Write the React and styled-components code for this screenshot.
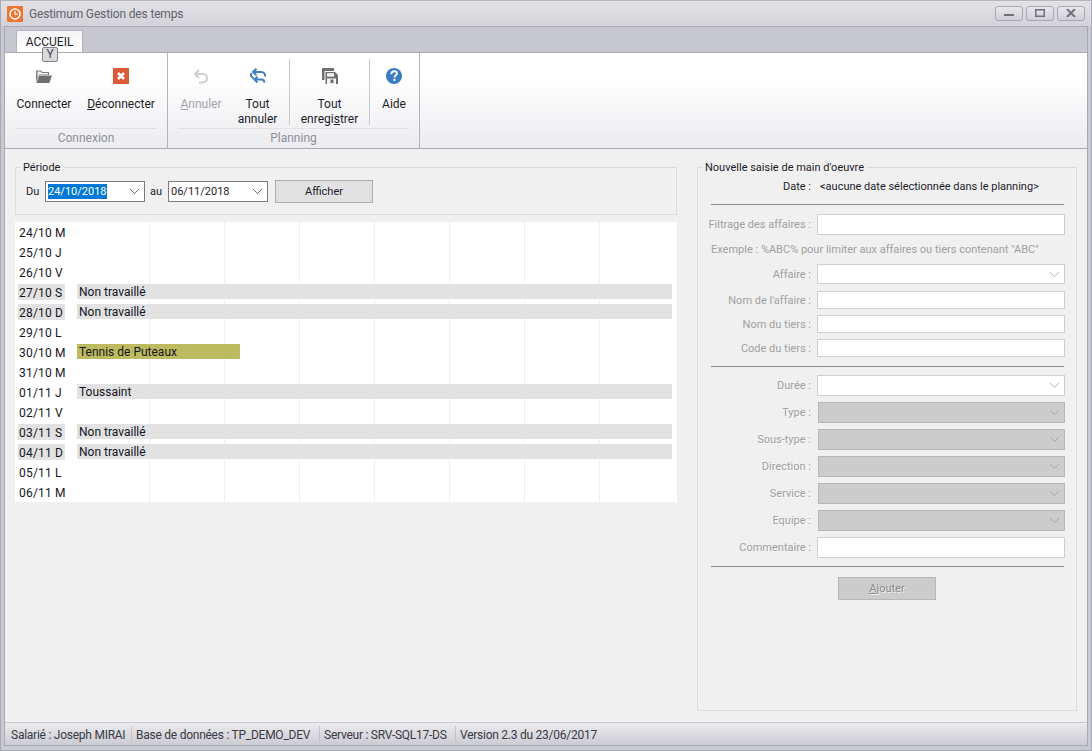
import React from 'react';
import styled, { createGlobalStyle } from 'styled-components';

const GlobalStyle = createGlobalStyle`
  html, body {
    margin: 0;
    padding: 0;
    height: 100%;
    overflow: hidden;
  }
  #root {
    height: 100%;
  }
`;

const Window = styled.div`
  width: 1092px;
  height: 751px;
  box-sizing: border-box;
  display: flex;
  flex-direction: column;
  background: #c9c9d1;
  border: 1px solid #a9a9b3;
  border-top-color: #b5b5bd;
  font-family: Roboto, "Noto Sans", sans-serif;
  font-size: 12px;
  color: #1c1c28;
`;

const TitleBar = styled.div`
  height: 25px;
  flex: none;
  display: flex;
  align-items: center;
  padding: 0 6px 0 6px;
  background: linear-gradient(180deg, #e2e2e6 0%, #d2d2d8 100%);
`;

const AppLogo = styled.svg`
  width: 16px;
  height: 16px;
  margin-right: 6px;
`;

const TitleText = styled.div`
  flex: 1;
  color: #62626c;
  letter-spacing: -0.15px;
`;

const WinButtons = styled.div`
  display: flex;
  gap: 3px;
  margin-top: -1px;
`;

const WinButton = styled.div`
  width: 28px;
  height: 15px;
  box-sizing: border-box;
  border: 1px solid #a8a8b2;
  border-radius: 3px;
  background: linear-gradient(180deg, #e8e8ec 0%, #cfcfd6 100%);
  display: flex;
  align-items: center;
  justify-content: center;
`;

const Inner = styled.div`
  flex: 1;
  display: flex;
  flex-direction: column;
  margin: 0 3px 4px;
  border: 1px solid #a9a9b3;
  min-height: 0;
`;

const TabStrip = styled.div`
  height: 25px;
  flex: none;
  background: #c7c7cf;
  padding: 3px 0 0 11px;
  box-sizing: border-box;
  position: relative;
`;

const Tab = styled.div`
  width: 67px;
  height: 22px;
  box-sizing: border-box;
  padding-top: 5px;
  background: linear-gradient(180deg, #f4f4f6 0%, #ffffff 100%);
  border: 1px solid #b4b4bd;
  border-bottom: none;
  border-radius: 2px 2px 0 0;
  text-align: center;
  line-height: 12px;
  color: #1c1c28;
`;

const KeyTip = styled.div`
  position: absolute;
  left: 37px;
  top: 20px;
  width: 16px;
  height: 15px;
  box-sizing: border-box;
  border: 1px solid #82828c;
  border-radius: 2px;
  background: #d9d9de;
  text-align: center;
  line-height: 13px;
  color: #4a4a52;
  z-index: 2;
`;

const Ribbon = styled.div`
  height: 95px;
  flex: none;
  display: flex;
  background: linear-gradient(180deg, #ffffff 0%, #ffffff 25%, #ececf0 100%);
  border-top: 1px solid #a9a9b3;
  border-bottom: 1px solid #a9a9b3;
  box-sizing: content-box;
`;

const RibbonGroup = styled.div`
  width: ${p => p.$w}px;
  box-sizing: border-box;
  display: flex;
  flex-direction: column;
  border-right: 1px solid #b4b4bd;
`;

const GroupButtons = styled.div`
  height: 75px;
  display: flex;
  padding-left: ${p => p.$pad}px;
  padding-top: 6px;
  box-sizing: border-box;
`;

const GroupName = styled.div`
  margin: 0 10px;
  height: 19px;
  border-top: 1px solid #e2e2e6;
  text-align: center;
  line-height: 18px;
  color: #8e8e98;
`;

const RibbonButton = styled.div`
  width: ${p => p.$w}px;
  box-sizing: border-box;
  display: flex;
  flex-direction: column;
  align-items: center;
  text-align: center;
  line-height: 15px;
  color: ${p => (p.$off ? '#a3a3ab' : '#1c1c28')};
  ${p => p.$split && 'border-right: 1px solid #c9c9cf; margin-bottom: 3px;'}
`;

const IconSlot = styled.div`
  height: 34px;
  flex: none;
  margin-bottom: 4px;
  display: flex;
  align-items: center;
  justify-content: center;
`;

const Content = styled.div`
  flex: 1;
  display: flex;
  gap: 20px;
  background: #f0f0f0;
  padding: 11px 10px 11px 10px;
  min-height: 0;
  font-size: 11px;
`;

const LeftColumn = styled.div`
  width: 662px;
  flex: none;
  display: flex;
  flex-direction: column;
  gap: 7px;
`;

const Group = styled.fieldset`
  margin: 0;
  padding: 0;
  min-width: 0;
  border: 1px solid #dcdcdc;
  box-sizing: border-box;
`;

const Legend = styled.legend`
  height: 14px;
  padding: 0 3px 0 ${p => p.$pad}px;
  margin-left: ${p => p.$left}px;
  line-height: 16px;
  color: #1c1c28;
`;

const PeriodBar = styled.div`
  height: 26px;
  display: flex;
  align-items: center;
  margin-top: 4px;
  margin-bottom: 10px;
  padding-left: 10px;
`;

const PeriodLabel = styled.span`
  width: ${p => p.$w}px;
  color: #1c1c28;
`;

const DateCombo = styled.div`
  width: 100px;
  height: 21px;
  box-sizing: border-box;
  border: 1px solid #7a7a7a;
  background: #fff;
  display: flex;
  align-items: center;
  justify-content: space-between;
  padding: 0 4px 0 2px;
  margin-right: ${p => p.$gap}px;
`;

const Selected = styled.span`
  background: ${p => (p.$on ? '#0078d7' : 'transparent')};
  color: ${p => (p.$on ? '#fff' : '#1c1c28')};
  line-height: 15px;
`;

const ShowButton = styled.div`
  width: 98px;
  height: 23px;
  box-sizing: border-box;
  border: 1px solid #adadad;
  background: #e1e1e1;
  text-align: center;
  line-height: 21px;
  color: #1c1c28;
`;

const Planning = styled.div`
  background: #fff;
  display: flex;
  flex-direction: column;
  position: relative;
  font-size: 12px;
`;

const GridLines = styled.div`
  position: absolute;
  inset: 0 0 0 134px;
  display: grid;
  grid-template-columns: repeat(7, 75px);
`;

const GridLine = styled.div`
  border-left: 1px solid #efefef;
`;

const DayRow = styled.div`
  height: 20px;
  display: flex;
  align-items: flex-start;
  position: relative;
  padding: 2px 0 0 3px;
  box-sizing: border-box;
`;

const DayLabel = styled.div`
  width: 47px;
  height: 16px;
  padding-left: 1px;
  box-sizing: border-box;
  line-height: 18px;
  letter-spacing: 0.2px;
  white-space: nowrap;
  color: #14141e;
  background: ${p => (p.$off ? '#e2e2e2' : 'transparent')};
`;

const DayBar = styled.div`
  width: ${p => p.$w}px;
  height: 15px;
  margin-left: 12px;
  padding-left: 2px;
  box-sizing: border-box;
  line-height: 16px;
  color: #14141e;
  background: ${p => p.$bg};
`;

const FormColumn = styled(Group)`
  width: 380px;
  flex: none;
  display: block;
`;

const Form = styled.div`
  padding: 0 11px 0 9px;
  display: flex;
  flex-direction: column;
`;

const DateLine = styled.div`
  display: flex;
  height: 16px;
  margin-top: 5px;
  line-height: 16px;
  color: #1c1c28;
`;

const DateCaption = styled.span`
  width: 104px;
  text-align: right;
`;

const DateValue = styled.span`
  margin-left: 9px;
`;

const Separator = styled.div`
  height: 1px;
  background: #8c8c8c;
  margin: ${p => p.$top}px 1px ${p => p.$bottom}px 4px;
`;

const Row = styled.div`
  display: flex;
  align-items: center;
  height: ${p => p.$h}px;
  margin-bottom: ${p => p.$gap}px;
`;

const RowLabel = styled.div`
  width: 104px;
  flex: none;
  text-align: right;
  color: #a0a0a0;
  white-space: nowrap;
  ${p => p.$shadow && 'text-shadow: 1px 1px 0 rgba(255, 255, 255, 0.7);'}
`;

const Field = styled.div`
  width: ${p => (p.$grey ? 247 : 248)}px;
  height: 100%;
  margin-left: ${p => (p.$grey ? 7 : 6)}px;
  box-sizing: border-box;
  border: 1px solid ${p => (p.$grey ? '#b7b7b7' : '#cfcfcf')};
  background: ${p => (p.$grey ? '#cccccc' : '#ffffff')};
  display: flex;
  align-items: center;
  justify-content: flex-end;
  padding-right: 4px;
`;

const Hint = styled.div`
  height: 16px;
  line-height: 16px;
  margin: 7px 0 6px 4px;
  color: #a0a0a0;
  white-space: nowrap;
`;

const AddButton = styled.div`
  width: 98px;
  height: 23px;
  box-sizing: border-box;
  margin: 10px 0 0 131px;
  border: 1px solid #b7b7b7;
  background: #cccccc;
  text-align: center;
  line-height: 21px;
  color: #8a8a8a;
  text-shadow: 1px 1px 0 rgba(255, 255, 255, 0.7);
`;

const StatusBar = styled.div`
  height: 23px;
  flex: none;
  display: flex;
  align-items: center;
  padding-left: 2px;
  background: linear-gradient(180deg, #ececee 0%, #cbcbd2 100%);
  border-top: 1px solid #c9c9cf;
  box-sizing: border-box;
  color: #3a3a44;
  letter-spacing: -0.25px;
`;

const StatusItem = styled.div`
  padding: 0 4px;
  height: 17px;
  line-height: 18px;
  white-space: nowrap;
  width: ${p => p.$w}px;
  box-sizing: border-box;
  ${p => !p.$last && 'border-right: 1px solid #c4c4cb;'}
`;

function Chevron({ color = '#6a6a6a' }) {
  return (
    <svg width="11" height="7" viewBox="0 0 11 7">
      <path d="M1 1l4.5 4.5L10 1" fill="none" stroke={color} strokeWidth="1" />
    </svg>
  );
}

function FolderIcon() {
  return (
    <svg width="16" height="14" viewBox="0 0 16 14">
      <path d="M0 1.5h5L6.5 3H13v3H3L0 13z" fill="#7c7c7c" />
      <path d="M1.5 2.5h3L6 4h6v1.5H3L1.5 9z" fill="#f2f2f2" />
      <path d="M3.2 6.5H16L13.3 14H0.4z" fill="#6e6e6e" />
    </svg>
  );
}

function CloseIcon() {
  return (
    <svg width="16" height="16" viewBox="0 0 16 16">
      <rect width="16" height="16" fill="#dc5a38" />
      <path d="M5 5l6 6M11 5l-6 6" stroke="#fff" strokeWidth="2.6" />
    </svg>
  );
}

function UndoIcon() {
  return (
    <svg width="16" height="15" viewBox="0 0 16 15">
      <path d="M6 1L2 5l4 4" fill="none" stroke="#cfcfd2" strokeWidth="2" />
      <path d="M2.5 5H10c5.5 0 5.5 8.5-1 8.5H6" fill="none" stroke="#cfcfd2" strokeWidth="2" />
    </svg>
  );
}

function UndoAllIcon() {
  return (
    <svg width="16" height="16" viewBox="0 0 16 16">
      <path d="M6.5 0.7L3 4l3.5 3.3" fill="none" stroke="#3f7fc0" strokeWidth="2" />
      <path d="M3.5 4H11c3.5 0 4.5 2.5 3.8 4.5" fill="none" stroke="#3f7fc0" strokeWidth="2" />
      <path d="M7.5 8.7L4.5 11.5l3 3" fill="none" stroke="#3f7fc0" strokeWidth="2" />
      <path d="M5 11.5h6.5c1.8 0 2.8 1.2 3 3.2" fill="none" stroke="#3f7fc0" strokeWidth="2" />
      <path d="M1.4 5c-1 2.5 0 4.8 2.6 5.3" fill="none" stroke="#3f7fc0" strokeWidth="2" />
    </svg>
  );
}

function SaveAllIcon() {
  return (
    <svg width="16" height="16" viewBox="0 0 16 16">
      <path d="M0 0h12v3H2.5v9H0z" fill="#6f6f6f" />
      <path d="M3.5 4H13l3 3v9H3.5z" fill="#6f6f6f" />
      <rect x="5" y="5.2" width="7" height="3.4" fill="#f4f4f4" />
      <rect x="5" y="10.5" width="9" height="5.5" fill="#f4f4f4" />
      <rect x="8.5" y="11.5" width="3" height="3.5" fill="#6f6f6f" />
    </svg>
  );
}

function HelpIcon() {
  return (
    <svg width="16" height="16" viewBox="0 0 16 16">
      <circle cx="8" cy="8" r="8" fill="#3a7cc4" />
      <path d="M5.3 6.2C5.4 4 6.8 3.2 8.2 3.2c1.6 0 2.7 1 2.7 2.3 0 2-2.4 2-2.4 4" fill="none" stroke="#fff" strokeWidth="1.9" />
      <rect x="7.4" y="10.8" width="2.1" height="2.1" fill="#fff" />
    </svg>
  );
}

const days = [
  { d: '24/10 M' },
  { d: '25/10 J' },
  { d: '26/10 V' },
  { d: '27/10 S', off: true, bar: 'Non travaillé' },
  { d: '28/10 D', off: true, bar: 'Non travaillé' },
  { d: '29/10 L' },
  { d: '30/10 M', bar: 'Tennis de Puteaux', w: 163, bg: '#bdbb5f' },
  { d: '31/10 M' },
  { d: '01/11 J', bar: 'Toussaint' },
  { d: '02/11 V' },
  { d: '03/11 S', off: true, bar: 'Non travaillé' },
  { d: '04/11 D', off: true, bar: 'Non travaillé' },
  { d: '05/11 L' },
  { d: '06/11 M' },
];

const greyRows = ['Type', 'Sous-type', 'Direction', 'Service', 'Equipe'];

export default function App() {
  return (
    <Window>
      <GlobalStyle />
      <TitleBar>
        <AppLogo viewBox="0 0 16 16">
          <rect width="16" height="16" rx="1" fill="#ee7430" />
          <circle cx="8" cy="8" r="5" fill="none" stroke="#fff" strokeWidth="1.5" />
          <path d="M8 5v3.2h2.6" fill="none" stroke="#fff" strokeWidth="1.2" />
        </AppLogo>
        <TitleText>Gestimum Gestion des temps</TitleText>
        <WinButtons>
          <WinButton>
            <svg width="10" height="8" viewBox="0 0 10 8"><rect y="5" width="10" height="2" fill="#6f6f7c" /></svg>
          </WinButton>
          <WinButton>
            <svg width="10" height="8" viewBox="0 0 10 8"><rect x="0.75" y="0.75" width="8.5" height="6.5" fill="none" stroke="#6f6f7c" strokeWidth="1.5" /></svg>
          </WinButton>
          <WinButton>
            <svg width="10" height="8" viewBox="0 0 10 8"><path d="M1 0l8 8M9 0L1 8" stroke="#6f6f7c" strokeWidth="2" /></svg>
          </WinButton>
        </WinButtons>
      </TitleBar>
      <Inner>
        <TabStrip>
          <Tab>ACCUEIL</Tab>
          <KeyTip>Y</KeyTip>
        </TabStrip>
        <Ribbon>
          <RibbonGroup $w={163}>
            <GroupButtons $pad={7}>
              <RibbonButton $w={64}>
                <IconSlot><FolderIcon /></IconSlot>
                Connecter
              </RibbonButton>
              <RibbonButton $w={90}>
                <IconSlot><CloseIcon /></IconSlot>
                <span><u>D</u>éconnecter</span>
              </RibbonButton>
            </GroupButtons>
            <GroupName>Connexion</GroupName>
          </RibbonGroup>
          <RibbonGroup $w={252}>
            <GroupButtons $pad={8}>
              <RibbonButton $w={50} $off>
                <IconSlot><UndoIcon /></IconSlot>
                <span><u>A</u>nnuler</span>
              </RibbonButton>
              <RibbonButton $w={64} $split>
                <IconSlot><UndoAllIcon /></IconSlot>
                <span>Tout<br />annuler</span>
              </RibbonButton>
              <RibbonButton $w={80} $split>
                <IconSlot><SaveAllIcon /></IconSlot>
                <span>Tout<br />enregi<u>s</u>trer</span>
              </RibbonButton>
              <RibbonButton $w={48}>
                <IconSlot><HelpIcon /></IconSlot>
                Aide
              </RibbonButton>
            </GroupButtons>
            <GroupName>Planning</GroupName>
          </RibbonGroup>
        </Ribbon>
        <Content>
          <LeftColumn>
            <Group>
              <Legend $left={4} $pad={3}>Période</Legend>
              <PeriodBar>
                <PeriodLabel $w={19}>Du</PeriodLabel>
                <DateCombo $gap={5}>
                  <Selected $on>24/10/2018</Selected>
                  <Chevron />
                </DateCombo>
                <PeriodLabel $w={18}>au</PeriodLabel>
                <DateCombo $gap={7}>
                  <Selected>06/11/2018</Selected>
                  <Chevron />
                </DateCombo>
                <ShowButton>Afficher</ShowButton>
              </PeriodBar>
            </Group>
            <Planning>
              <GridLines>
                {Array.from({ length: 7 }, (_, i) => <GridLine key={i} />)}
              </GridLines>
              {days.map(day => (
                <DayRow key={day.d}>
                  <DayLabel $off={day.off}>{day.d}</DayLabel>
                  {day.bar && <DayBar $w={day.w || 595} $bg={day.bg || '#e2e2e2'}>{day.bar}</DayBar>}
                </DayRow>
              ))}
            </Planning>
          </LeftColumn>
          <FormColumn>
            <Legend $left={4} $pad={3}>Nouvelle saisie de main d'oeuvre</Legend>
            <Form>
              <DateLine>
                <DateCaption>Date :</DateCaption>
                <DateValue>&lt;aucune date sélectionnée dans le planning&gt;</DateValue>
              </DateLine>
              <Separator $top={9} $bottom={9} />
              <Row $h={21} $gap={0}>
                <RowLabel>Filtrage des affaires :</RowLabel>
                <Field />
              </Row>
              <Hint>Exemple : %ABC% pour limiter aux affaires ou tiers contenant "ABC"</Hint>
              <Row $h={20} $gap={7}>
                <RowLabel>Affaire :</RowLabel>
                <Field><Chevron color="#b5b5b5" /></Field>
              </Row>
              <Row $h={18} $gap={6}>
                <RowLabel>Nom de l'affaire :</RowLabel>
                <Field />
              </Row>
              <Row $h={18} $gap={6}>
                <RowLabel>Nom du tiers :</RowLabel>
                <Field />
              </Row>
              <Row $h={18} $gap={0}>
                <RowLabel>Code du tiers :</RowLabel>
                <Field />
              </Row>
              <Separator $top={9} $bottom={8} />
              <Row $h={21} $gap={6}>
                <RowLabel>Durée :</RowLabel>
                <Field><Chevron color="#b5b5b5" /></Field>
              </Row>
              {greyRows.map(label => (
                <Row key={label} $h={21} $gap={6}>
                  <RowLabel $shadow>{label} :</RowLabel>
                  <Field $grey><Chevron color="#a8a8a8" /></Field>
                </Row>
              ))}
              <Row $h={21} $gap={0}>
                <RowLabel>Commentaire :</RowLabel>
                <Field />
              </Row>
              <Separator $top={8} $bottom={0} />
              <AddButton><u>A</u>jouter</AddButton>
            </Form>
          </FormColumn>
        </Content>
        <StatusBar>
          <StatusItem $w={125}>Salarié : Joseph MIRAI</StatusItem>
          <StatusItem $w={188}>Base de données : TP_DEMO_DEV</StatusItem>
          <StatusItem $w={136}>Serveur : SRV-SQL17-DS</StatusItem>
          <StatusItem $last>Version 2.3 du 23/06/2017</StatusItem>
        </StatusBar>
      </Inner>
    </Window>
  );
}
